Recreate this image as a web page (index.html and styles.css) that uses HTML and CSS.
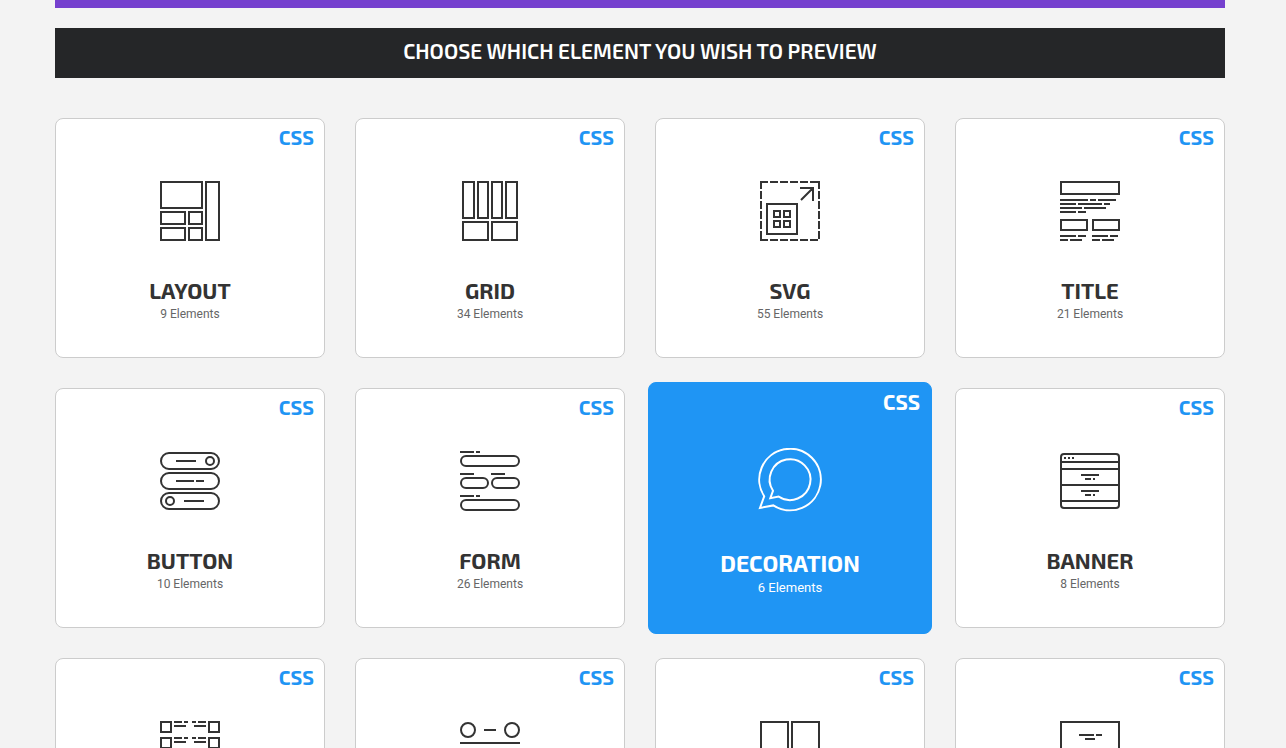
FILE: index.html
```html
<!DOCTYPE html>
<html lang="en">
<head>
<meta charset="utf-8">
<title>Elements</title>
<link rel="stylesheet" href="styles.css">
</head>
<body>
<div class="strip"></div>
<main class="container">
  <h2 class="heading">CHOOSE WHICH ELEMENT YOU WISH TO PREVIEW</h2>
  <div class="cards">
    <a class="card" href="#">
      <span class="tag">CSS</span>
      <svg class="icon" viewBox="0 0 60 60" aria-hidden="true"><path d="M1 1h41v26H1zM46 1h13v58H46zM1 31h24v12H1zM29 31h13v12H29zM1 47h24v12H1zM29 47h13v12H29z"/></svg>
      <h3 class="name">LAYOUT</h3>
      <p class="count">9 Elements</p>
    </a>
    <a class="card" href="#">
      <span class="tag">CSS</span>
      <svg class="icon" viewBox="0 0 60 60" aria-hidden="true"><path d="M3 1h11v36H3zM18 1h10v36H18zM32 1h10v36H32zM46 1h11v36H46zM3 41h25v18H3zM32 41h25v18H32z"/></svg>
      <h3 class="name">GRID</h3>
      <p class="count">34 Elements</p>
    </a>
    <a class="card" href="#">
      <span class="tag">CSS</span>
      <svg class="icon" viewBox="0 0 60 60" aria-hidden="true"><path stroke-dasharray="8 2 8 2 8 2 8 2 8 2 8 2" d="M0 1h60M0 59h60M1 0v60M59 0v60"/><path d="M7 23h30v30H7zM14 30h6v6h-6zM24 30h6v6h-6zM14 40h6v6h-6zM24 40h6v6h-6zM40 7h13v13M41 19L53 7"/></svg>
      <h3 class="name">SVG</h3>
      <p class="count">55 Elements</p>
    </a>
    <a class="card" href="#">
      <span class="tag">CSS</span>
      <svg class="icon" viewBox="0 0 60 60" aria-hidden="true"><path d="M1 1h58v12H1zM0 19h28M30 19h6M38 19h18M0 23h16M18 23h24M44 23h6M0 27h22M24 27h22M0 31h16M18 31h8M1 39h26v10H1zM33 39h26v10H33zM0 55h16M18 55h8M32 55h16M50 55h8M0 59h8M10 59h12M32 59h8M42 59h12"/></svg>
      <h3 class="name">TITLE</h3>
      <p class="count">21 Elements</p>
    </a>
    <a class="card" href="#">
      <span class="tag">CSS</span>
      <svg class="icon" viewBox="0 0 60 60" aria-hidden="true"><rect x="1" y="2" width="58" height="16" rx="8"/><rect x="1" y="22" width="58" height="16" rx="8"/><rect x="1" y="42" width="58" height="16" rx="8"/><circle cx="50" cy="10" r="4"/><circle cx="10" cy="50" r="4"/><path d="M16 10h20M16 30h18M36 30h8M24 50h20"/></svg>
      <h3 class="name">BUTTON</h3>
      <p class="count">10 Elements</p>
    </a>
    <a class="card" href="#">
      <span class="tag">CSS</span>
      <svg class="icon" viewBox="0 0 60 60" aria-hidden="true"><rect x="1" y="5" width="58" height="10" rx="5"/><rect x="1" y="27" width="27" height="10" rx="5"/><rect x="32" y="27" width="27" height="10" rx="5"/><rect x="1" y="49" width="58" height="10" rx="5"/><path d="M0 1h14M16 1h4M0 23h14M31 23h14M0 45h14M16 45h4"/></svg>
      <h3 class="name">FORM</h3>
      <p class="count">26 Elements</p>
    </a>
    <a class="card card-active" href="#">
      <span class="tag">CSS</span>
      <svg class="icon" viewBox="0 0 64 64" aria-hidden="true"><path d="M6.2 48.3A30.8 30.8 0 1 1 15.3 57.4L2 59.9Z"/><path d="M15 42.8A20.4 20.4 0 1 1 20.6 48.5L12.3 50.2Z"/></svg>
      <h3 class="name">DECORATION</h3>
      <p class="count">6 Elements</p>
    </a>
    <a class="card" href="#">
      <span class="tag">CSS</span>
      <svg class="icon" viewBox="0 0 60 60" aria-hidden="true"><rect x="1" y="3" width="58" height="54" rx="3"/><path d="M1 11h58M1 18h58M1 34h58M1 50h58M4 7h2M8 7h2M12 7h2M21 24h18M25 28h6M33 28h2M21 40h18M25 44h6M33 44h2"/></svg>
      <h3 class="name">BANNER</h3>
      <p class="count">8 Elements</p>
    </a>
    <a class="card" href="#">
      <span class="tag">CSS</span>
      <svg class="icon" viewBox="0 0 60 60" aria-hidden="true"><path d="M1 1h10v10H1zM49 1h10v10H49zM14 1h8M24 1h4M32 1h4M38 1h8M14 5h12M34 5h12M1 17h10v10H1zM49 17h10v10H49zM14 17h8M24 17h4M32 17h4M38 17h8M14 21h12M34 21h12"/></svg>
    </a>
    <a class="card" href="#">
      <span class="tag">CSS</span>
      <svg class="icon" viewBox="0 0 60 60" aria-hidden="true"><circle cx="8" cy="9" r="7"/><circle cx="52" cy="9" r="7"/><path d="M24 9h12M0 22h60"/></svg>
    </a>
    <a class="card" href="#">
      <span class="tag">CSS</span>
      <svg class="icon" viewBox="0 0 60 60" aria-hidden="true"><path d="M1 1h27v58H1zM32 1h27v58H32z"/></svg>
    </a>
    <a class="card" href="#">
      <span class="tag">CSS</span>
      <svg class="icon" viewBox="0 0 60 60" aria-hidden="true"><path d="M1 1h58v58H1zM19 14h15M36 14h6M25 18h10"/></svg>
    </a>
  </div>
</main>
</body>
</html>
```

FILE: styles.css
```css
* { box-sizing: border-box; }

body {
  margin: 0;
  padding: 0 61px 0 55px;
  background: #f3f3f3;
  color: #333;
  font-family: "Exo 2", Roboto, sans-serif;
}

.strip {
  height: 8px;
  max-width: 1170px;
  margin: 0 auto;
  background: #7540ce;
}

.container {
  max-width: 1170px;
  margin: 20px auto 0;
}

.heading {
  margin: 0 0 40px;
  padding: 8px 10px 12px;
  background: #252628;
  color: #fff;
  font-size: 21px;
  font-weight: 600;
  line-height: 30px;
  text-align: center;
}

.cards {
  display: grid;
  grid-template-columns: repeat(4, 1fr);
  gap: 30px;
}

.card {
  position: relative;
  display: flex;
  flex-direction: column;
  align-items: center;
  min-height: 240px;
  padding: 62px 10px 34px;
  border: 1px solid #ccc;
  border-radius: 8px;
  background: #fff;
  color: #333;
  text-decoration: none;
}

.tag {
  position: absolute;
  top: 3px;
  right: 10px;
  color: #1f95f4;
  font-size: 20px;
  font-weight: 700;
  line-height: 30px;
}

.icon {
  width: 60px;
  height: 60px;
  fill: none;
  stroke: #333;
  stroke-width: 2;
}

.name {
  margin: 34px 0 0;
  font-size: 22px;
  font-weight: 700;
  line-height: 30px;
}

.count {
  margin: 0;
  color: #666;
  font-family: Roboto, sans-serif;
  font-size: 12px;
  line-height: 18px;
}

.card-active {
  z-index: 1;
  margin: -6px -7px;
  padding-top: 65px;
  border-color: #1f95f4;
  background: #1f95f4;
  color: #fff;
}

.card-active .tag {
  top: 4px;
  right: 11px;
  color: #fff;
  font-size: 21px;
}

.card-active .icon {
  width: 64px;
  height: 64px;
  stroke: #fff;
}

.card-active .name {
  margin-top: 36px;
  line-height: 30px;
  font-size: 23px;
}

.card-active .count {
  color: #fff;
  font-size: 13px;
  line-height: 20px;
}
```
